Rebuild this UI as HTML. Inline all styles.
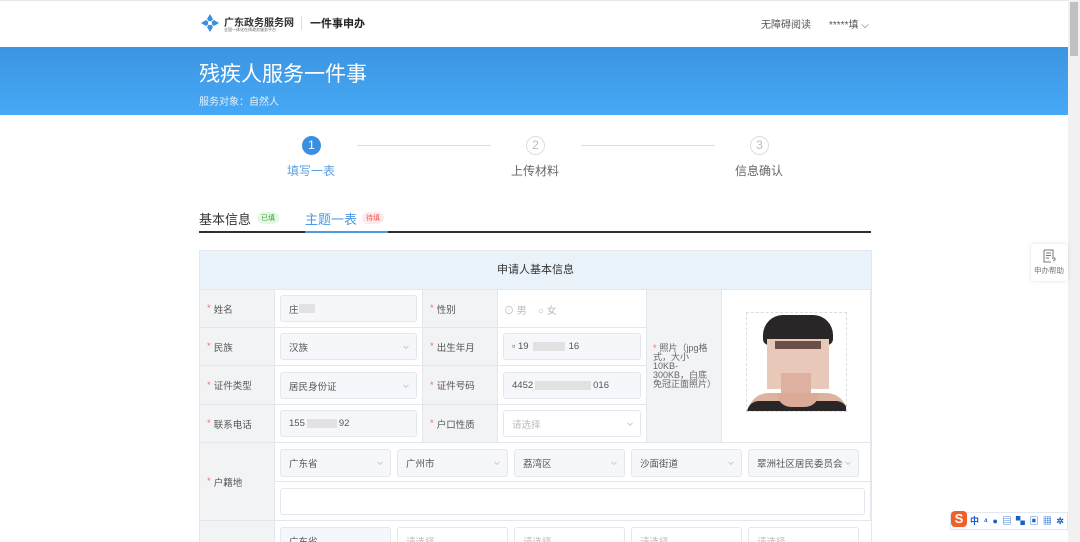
<!DOCTYPE html>
<html><head><meta charset="utf-8"><style>
*{box-sizing:border-box;margin:0;padding:0}
html,body{width:1080px;height:542px;overflow:hidden}
body{background:#fff;font-family:"Liberation Sans","Noto Sans CJK SC",sans-serif;position:relative;color:#333}
.abs{position:absolute}
.hdr{left:0;top:0;width:1068px;height:47px;background:#fff;border-top:1px solid #e6e6e6}
.banner{left:0;top:47px;width:1068px;height:68px;background:linear-gradient(#3c94e0,#46a9f6)}
.sb{left:1068px;top:0;width:12px;height:542px;background:#f1f1f1}
.sb div{position:absolute;left:2px;top:2px;width:8px;height:54px;background:#c1c1c1}
.cell{position:absolute;border-right:1px solid #e4e7ed;border-bottom:1px solid #e4e7ed}
.lab{background:#f2f3f5;font-size:9.5px;color:#555;padding-left:7px;display:flex;align-items:center}
.lab b{color:#f56c6c;font-weight:normal;margin-right:3px}
.inp{position:absolute;background:#f5f7fa;border:1px solid #e4e7ed;border-radius:3px;font-size:9.5px;color:#555;padding-left:8px;display:flex;align-items:center}
.inp.w{background:#fff;color:#bbb}
.inp i{position:absolute;right:8px;top:50%;width:4px;height:4px;border-right:1px solid #ccc;border-bottom:1px solid #ccc;transform:translateY(-70%) rotate(45deg)}
.blur{display:inline-block;height:9px;background:#e2e2e2;vertical-align:middle}
</style></head><body>
<div class="abs hdr"></div>
<svg class="abs" style="left:200px;top:13px" width="20" height="20" viewBox="0 0 20 20"><g fill="#3b8fe0"><path d="M10 1l3 5-3 4-3-4z"/><path d="M19 10l-5 3-4-3 4-3z"/><path d="M10 19l-3-5 3-4 3 4z"/><path d="M1 10l5-3 4 3-4 3z"/></g><circle cx="10" cy="10" r="2" fill="#fff"/></svg>
<div class="abs" style="left:224px;top:14px;font-size:10px;color:#333;font-weight:bold">广东政务服务网</div>
<div class="abs" style="left:224px;top:27px;font-size:4px;color:#666;white-space:nowrap">全国一体化在线政务服务平台</div>
<div class="abs" style="left:301px;top:16px;width:1px;height:14px;background:#ddd"></div>
<div class="abs" style="left:310px;top:15px;font-size:11px;color:#222;font-weight:bold">一件事申办</div>
<div class="abs" style="left:761px;top:16px;font-size:10px;color:#555">无障碍阅读</div>
<div class="abs" style="left:829px;top:16px;font-size:10px;color:#555">*****填 ⌵</div>
<div class="abs banner"></div>
<div class="abs" style="left:199px;top:58px;font-size:21px;color:#fff">残疾人服务一件事</div>
<div class="abs" style="left:199px;top:93px;font-size:10px;color:#e3f0fc">服务对象：自然人</div>
<div class="abs sb"><div></div></div>
<div class="abs" style="left:302px;top:136px;width:19px;height:19px;border-radius:50%;background:#3b8fe0;color:#fff;font-size:12px;text-align:center;line-height:19px">1</div>
<div class="abs" style="left:357px;top:145px;width:134px;height:1px;background:#e0e0e0"></div>
<div class="abs" style="left:526px;top:136px;width:19px;height:19px;border-radius:50%;border:1px solid #ddd;color:#bbb;font-size:12px;text-align:center;line-height:17px">2</div>
<div class="abs" style="left:581px;top:145px;width:134px;height:1px;background:#e0e0e0"></div>
<div class="abs" style="left:750px;top:136px;width:19px;height:19px;border-radius:50%;border:1px solid #ddd;color:#bbb;font-size:12px;text-align:center;line-height:17px">3</div>
<div class="abs" style="left:287px;top:162px;font-size:12px;color:#5a9fe0">填写一表</div>
<div class="abs" style="left:511px;top:162px;font-size:12px;color:#666">上传材料</div>
<div class="abs" style="left:735px;top:162px;font-size:12px;color:#666">信息确认</div>
<div class="abs" style="left:199px;top:209px;font-size:13px;color:#333">基本信息</div>
<div class="abs" style="left:257px;top:212px;font-size:7px;color:#3a3;background:#e6f7e6;border-radius:6px;padding:1px 4px">已填</div>
<div class="abs" style="left:305px;top:209px;font-size:13px;color:#4a9ae6">主题一表</div>
<div class="abs" style="left:362px;top:212px;font-size:7px;color:#e55;background:#fdeaea;border-radius:6px;padding:1px 4px">待填</div>
<div class="abs" style="left:199px;top:231px;width:672px;height:2px;background:#2a2f36"></div>
<div class="abs" style="left:305px;top:231px;width:83px;height:2px;background:#4a9ae6"></div>
<div class="abs" style="left:199px;top:250px;width:673px;height:292px;border-left:1px solid #e4e7ed;border-top:1px solid #e4e7ed;border-right:1px solid #e4e7ed"></div>
<div class="abs" style="left:200px;top:251px;width:671px;height:39px;background:#eaf2fa;font-size:11px;color:#333;text-align:center;line-height:39px;border-bottom:1px solid #e4e7ed">申请人基本信息</div>
<div class="cell lab" style="left:200px;top:290px;width:75px;height:38px"><b>*</b>姓名</div>
<div class="cell" style="left:275px;top:290px;width:148px;height:38px"></div>
<div class="inp" style="left:280px;top:295px;width:137px;height:27px">庄<span class="blur" style="width:16px"></span></div>
<div class="cell lab" style="left:423px;top:290px;width:75px;height:38px"><b>*</b>性别</div>
<div class="cell" style="left:498px;top:290px;width:149px;height:38px;font-size:10px;color:#bbb;padding:12px 0 0 6px">⊙ 男 &nbsp;&nbsp; ○ 女</div>
<div class="cell lab" style="left:200px;top:328px;width:75px;height:38px"><b>*</b>民族</div>
<div class="cell" style="left:275px;top:328px;width:148px;height:38px"></div>
<div class="inp" style="left:280px;top:333px;width:137px;height:27px">汉族<i></i></div>
<div class="cell lab" style="left:423px;top:328px;width:75px;height:38px"><b>*</b>出生年月</div>
<div class="cell" style="left:498px;top:328px;width:149px;height:38px"></div>
<div class="inp" style="left:503px;top:333px;width:138px;height:27px">▫ 19<span class="blur" style="width:32px;margin:0 4px"></span>16</div>
<div class="cell lab" style="left:200px;top:366px;width:75px;height:39px"><b>*</b>证件类型</div>
<div class="cell" style="left:275px;top:366px;width:148px;height:39px"></div>
<div class="inp" style="left:280px;top:372px;width:137px;height:27px">居民身份证<i></i></div>
<div class="cell lab" style="left:423px;top:366px;width:75px;height:39px"><b>*</b>证件号码</div>
<div class="cell" style="left:498px;top:366px;width:149px;height:39px"></div>
<div class="inp" style="left:503px;top:372px;width:138px;height:27px">4452<span class="blur" style="width:56px;margin:0 2px"></span>016</div>
<div class="cell lab" style="left:200px;top:405px;width:75px;height:38px"><b>*</b>联系电话</div>
<div class="cell" style="left:275px;top:405px;width:148px;height:38px"></div>
<div class="inp" style="left:280px;top:410px;width:137px;height:27px">155<span class="blur" style="width:30px;margin:0 2px"></span>92</div>
<div class="cell lab" style="left:423px;top:405px;width:75px;height:38px"><b>*</b>户口性质</div>
<div class="cell" style="left:498px;top:405px;width:149px;height:38px"></div>
<div class="inp w" style="left:503px;top:410px;width:138px;height:27px">请选择<i></i></div>
<div class="cell lab" style="left:647px;top:290px;width:75px;height:153px;line-height:9px;font-size:9px;color:#666;padding-left:6px;padding-right:8px"><span><b>*</b>照片（jpg格式，大小10KB-300KB，白底免冠正面照片）</span></div>
<div class="cell" style="left:722px;top:290px;width:149px;height:153px"></div>
<div class="abs" style="left:746px;top:312px;width:101px;height:100px;border:1px dashed #ddd;background:#fff;overflow:hidden">
 <div class="abs" style="left:0;top:80px;width:101px;height:22px;background:#ddb3a0;border-radius:30px 30px 0 0"></div>
 <div class="abs" style="left:0;top:88px;width:101px;height:14px;background:#2a2526;border-radius:12px 12px 0 0"></div>
 <div class="abs" style="left:30px;top:80px;width:42px;height:14px;background:#dcab98;border-radius:0 0 20px 20px"></div>
 <div class="abs" style="left:16px;top:2px;width:70px;height:30px;background:#2a2526;border-radius:20px 20px 6px 6px"></div>
 <div class="abs" style="left:20px;top:26px;width:62px;height:50px;background:#e8c8b8"></div>
 <div class="abs" style="left:28px;top:28px;width:46px;height:8px;background:#6a5048"></div>
 <div class="abs" style="left:34px;top:60px;width:30px;height:20px;background:#ddb0a0"></div>
</div>
<div class="cell lab" style="left:200px;top:443px;width:75px;height:78px"><b>*</b>户籍地</div>
<div class="cell" style="left:275px;top:443px;width:596px;height:39px"></div>
<div class="cell" style="left:275px;top:482px;width:596px;height:39px"></div>
<div class="inp" style="left:280px;top:449px;width:111px;height:28px">广东省<i></i></div>
<div class="inp" style="left:397px;top:449px;width:111px;height:28px">广州市<i></i></div>
<div class="inp" style="left:514px;top:449px;width:111px;height:28px">荔湾区<i></i></div>
<div class="inp" style="left:631px;top:449px;width:111px;height:28px">沙面街道<i></i></div>
<div class="inp" style="left:748px;top:449px;width:111px;height:28px;white-space:nowrap;overflow:hidden">翠洲社区居民委员会<i></i></div>
<div class="inp w" style="left:280px;top:488px;width:585px;height:27px"></div>
<div class="cell lab" style="left:200px;top:521px;width:75px;height:30px"></div>
<div class="inp" style="left:280px;top:527px;width:111px;height:28px">广东省</div>
<div class="inp w" style="left:397px;top:527px;width:111px;height:28px">请选择</div>
<div class="inp w" style="left:514px;top:527px;width:111px;height:28px">请选择</div>
<div class="inp w" style="left:631px;top:527px;width:111px;height:28px">请选择</div>
<div class="inp w" style="left:748px;top:527px;width:111px;height:28px">请选择</div>
<div class="abs" style="left:1031px;top:244px;width:37px;height:37px;background:#fff;box-shadow:0 0 4px rgba(0,0,0,.12);border-radius:3px"></div>
<svg class="abs" style="left:1043px;top:249px" width="13" height="14" viewBox="0 0 13 14" fill="none" stroke="#777" stroke-width="1"><path d="M1 1h9v7M1 1v12h7M3 4h5M3 6.5h5M3 9h3"/><path d="M9.5 10a1.3 1.3 0 1 1 1.3 1.3v1"/></svg>
<div class="abs" style="left:1034px;top:265px;font-size:7.5px;color:#777">申办帮助</div>
<div class="abs" style="left:950px;top:512px;width:118px;height:18px;background:#fff;border:1px solid #e3e8f0"></div>
<div class="abs" style="left:951px;top:511px;width:16px;height:16px;background:#f0612a;border-radius:4px;color:#fff;font-weight:bold;font-size:13px;text-align:center;line-height:16px">S</div>
<div class="abs" style="left:970px;top:514px;font-size:9px;color:#1a5fc9;font-weight:bold;white-space:nowrap;letter-spacing:1px">中 ⁴ ● ▤ ▚ ▣ ▦ ✲</div>
</body></html>
